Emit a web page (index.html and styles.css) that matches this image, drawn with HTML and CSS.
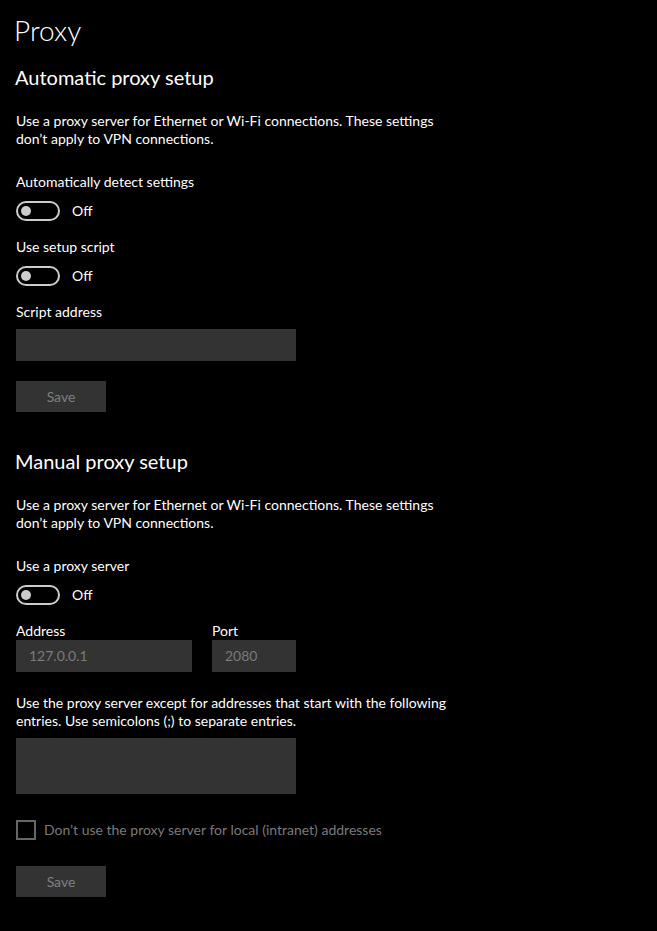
FILE: index.html
```html
<!DOCTYPE html>
<html lang="en">
<head>
<meta charset="utf-8">
<title>Proxy</title>
<link rel="stylesheet" href="styles.css">
</head>
<body>
<main class="page">
  <h1 class="title">Proxy</h1>

  <section class="section">
    <h2 class="heading">Automatic proxy setup</h2>
    <p class="desc">Use a proxy server for Ethernet or Wi-Fi connections. These settings don’t apply to VPN connections.</p>

    <div class="label label-first">Automatically detect settings</div>
    <div class="toggle-row">
      <span class="toggle"><span class="knob"></span></span>
      <span class="toggle-text">Off</span>
    </div>

    <div class="label">Use setup script</div>
    <div class="toggle-row">
      <span class="toggle"><span class="knob"></span></span>
      <span class="toggle-text">Off</span>
    </div>

    <div class="label">Script address</div>
    <div class="textbox textbox-wide"></div>

    <div class="button">Save</div>
  </section>

  <section class="section section-manual">
    <h2 class="heading">Manual proxy setup</h2>
    <p class="desc">Use a proxy server for Ethernet or Wi-Fi connections. These settings don’t apply to VPN connections.</p>

    <div class="label label-first">Use a proxy server</div>
    <div class="toggle-row">
      <span class="toggle"><span class="knob"></span></span>
      <span class="toggle-text">Off</span>
    </div>

    <div class="fields">
      <div class="field field-address">
        <div class="field-label">Address</div>
        <div class="textbox">127.0.0.1</div>
      </div>
      <div class="field field-port">
        <div class="field-label">Port</div>
        <div class="textbox">2080</div>
      </div>
    </div>

    <p class="desc desc-exceptions">Use the proxy server except for addresses that start with the following entries. Use semicolons (;) to separate entries.</p>
    <div class="textbox textbox-wide textarea"></div>

    <div class="check-row">
      <span class="checkbox"></span>
      <span class="check-text">Don’t use the proxy server for local (intranet) addresses</span>
    </div>

    <div class="button button-last">Save</div>
  </section>
</main>
</body>
</html>
```

FILE: styles.css
```css
html, body {
  margin: 0;
  padding: 0;
  background: #000;
}

body {
  color: #fff;
  font-family: "Lato", "Liberation Sans", sans-serif;
  font-size: 14px;
  line-height: 20px;
}

.page {
  padding: 10px 16px 0 16px;
}

.title {
  margin: 0 0 0 -2px;
  font-size: 28px;
  line-height: 40px;
  font-weight: 300;
}

.heading {
  margin: 13px 0 0 -1px;
  font-size: 20px;
  line-height: 28px;
  font-weight: 400;
}

.section-manual {
  margin-top: 35px;
}

.section-manual .heading {
  margin-top: 0;
}

.desc {
  margin: 21px 0 0 0;
  max-width: 440px;
  line-height: 18px;
}

.desc-exceptions {
  margin-top: 22px;
  max-width: 450px;
}

.label {
  margin-top: 16px;
}

.label-first {
  margin-top: 24px;
}

.toggle-row {
  display: flex;
  align-items: center;
  gap: 12px;
  margin-top: 9px;
  height: 20px;
}

.toggle {
  box-sizing: border-box;
  width: 44px;
  height: 20px;
  border: 2px solid #cccccc;
  border-radius: 10px;
  display: flex;
  align-items: center;
  padding-left: 3px;
}

.knob {
  width: 10px;
  height: 10px;
  border-radius: 50%;
  background: #cccccc;
}

.toggle-text {
  line-height: 20px;
}

.textbox {
  box-sizing: border-box;
  height: 32px;
  background: #333333;
  color: #7a7a7a;
  padding: 0 13px;
  line-height: 32px;
}

.textbox-wide {
  width: 280px;
  margin-top: 7px;
}

.button {
  width: 90px;
  height: 31px;
  margin-top: 20px;
  background: #333333;
  color: #7f7f7f;
  text-align: center;
  line-height: 31px;
}

.fields {
  display: flex;
  gap: 20px;
  margin-top: 17px;
}

.field-label {
  line-height: 18px;
}

.field-address .textbox {
  width: 176px;
}

.field-port .textbox {
  width: 84px;
}

.textarea {
  height: 56px;
  margin-top: 8px;
}

.check-row {
  display: flex;
  align-items: center;
  gap: 8px;
  margin-top: 26px;
  height: 20px;
}

.checkbox {
  box-sizing: border-box;
  width: 20px;
  height: 20px;
  border: 2px solid #666666;
}

.check-text {
  color: #7a7a7a;
}

.button-last {
  margin-top: 26px;
}
```
